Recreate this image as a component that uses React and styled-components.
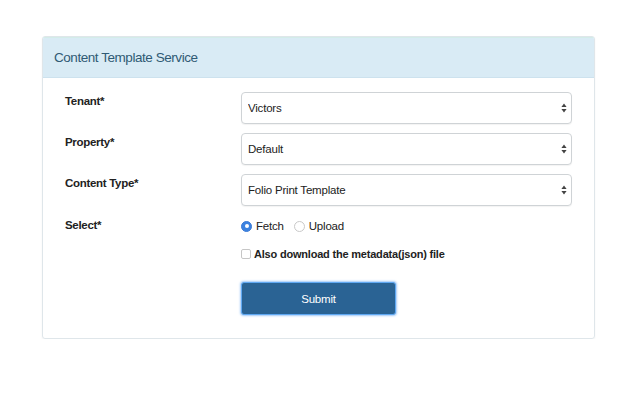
import React from "react";
import styled, { createGlobalStyle } from "styled-components";

const Global = createGlobalStyle`
  body {
    margin: 0;
    background: #fff;
    font-family: "Liberation Sans", Arial, sans-serif;
    color: #333;
  }
`;

const Page = styled.div`
  padding: 36px 45px 0 42px;
`;

const Panel = styled.section`
  width: 553px;
  box-sizing: border-box;
  border: 1px solid #dfe6ea;
  border-radius: 3px;
  box-shadow: 0 1px 2px rgba(0, 0, 0, 0.06);
  overflow: hidden;
`;

const Heading = styled.div`
  height: 41px;
  box-sizing: border-box;
  padding: 12px 11px 0;
  background: #d9ebf5;
  border-top: 1px solid #d3ece8;
  border-bottom: 1px solid #cde2ee;
  font-size: 13.5px;
  letter-spacing: -0.45px;
  color: #2f5a74;
`;

const Body = styled.div`
  padding: 14px 22px 23px 22px;
  display: flex;
  flex-direction: column;
  gap: 9px;
`;

const Row = styled.div`
  display: grid;
  grid-template-columns: 176px 1fr;
  align-items: start;
`;

const Label = styled.label`
  font-size: 11.5px;
  font-weight: bold;
  letter-spacing: -0.3px;
  color: #222;
  padding-top: ${(p) => p.$top || 3}px;
`;

const SelectWrap = styled.div`
  position: relative;
`;

const Select = styled.select`
  width: 100%;
  height: 32px;
  appearance: none;
  -webkit-appearance: none;
  border: 1px solid #cfd3d6;
  border-radius: 4px;
  background: #fff;
  box-shadow: 0 1px 1px rgba(0, 0, 0, 0.05);
  padding: 0 6px;
  font-family: "Liberation Sans", Arial, sans-serif;
  font-size: 11.5px;
  letter-spacing: -0.2px;
  color: #222;
`;

const Arrows = styled.svg`
  position: absolute;
  right: 5px;
  top: 11px;
  pointer-events: none;
`;

const Options = styled.div`
  display: flex;
  align-items: center;
  gap: 4px;
  font-size: 11.5px;
  letter-spacing: -0.2px;
  color: #222;
  height: 22px;
`;

const Radio = styled.span`
  width: 11px;
  height: 11px;
  border-radius: 50%;
  box-sizing: border-box;
  display: inline-flex;
  align-items: center;
  justify-content: center;
  background: ${(p) => (p.$on ? "#3b82e0" : "#fff")};
  border: 1px solid ${(p) => (p.$on ? "#3b7bd6" : "#c9c9c9")};
  margin-left: ${(p) => p.$gap || 0}px;
  &::after {
    content: "";
    width: 4px;
    height: 4px;
    border-radius: 50%;
    background: ${(p) => (p.$on ? "#fff" : "transparent")};
  }
`;

const Check = styled.span`
  width: 10px;
  height: 10px;
  box-sizing: border-box;
  border: 1px solid #c6c6c6;
  border-radius: 2px;
  background: #fff;
`;

const CheckText = styled.span`
  font-weight: bold;
  font-size: 11px;
  letter-spacing: -0.2px;
  margin-left: -1px;
`;

const Button = styled.button`
  width: 155px;
  height: 33px;
  margin-top: 17px;
  background: #2a6394;
  color: #fff;
  border: 1px solid #5fa8f2;
  border-radius: 3px;
  box-shadow: 0 0 2px 1px rgba(90, 160, 240, 0.55);
  font-family: "Liberation Sans", Arial, sans-serif;
  font-size: 11.5px;
  letter-spacing: -0.2px;
`;

const Field = ({ label, value }) => (
  <Row>
    <Label $top={3}>{label}</Label>
    <SelectWrap>
      <Select defaultValue={value}>
        <option>{value}</option>
      </Select>
      <Arrows width="6" height="10" viewBox="0 0 6 10">
        <path d="M3 0.5 L5.6 4 L0.4 4 Z M3 9.5 L5.6 6 L0.4 6 Z" fill="#444" />
      </Arrows>
    </SelectWrap>
  </Row>
);

export default function App() {
  return (
    <Page>
      <Global />
      <Panel>
        <Heading>Content Template Service</Heading>
        <Body>
          <Field label="Tenant*" value="Victors" />
          <Field label="Property*" value="Default" />
          <Field label="Content Type*" value="Folio Print Template" />
          <Row>
            <Label $top={4}>Select*</Label>
            <div>
              <Options>
                <Radio $on />
                Fetch
                <Radio $gap={6} />
                Upload
              </Options>
              <Options style={{ marginTop: 6 }}>
                <Check />
                <CheckText>Also download the metadata(json) file</CheckText>
              </Options>
              <Button>Submit</Button>
            </div>
          </Row>
        </Body>
      </Panel>
    </Page>
  );
}
